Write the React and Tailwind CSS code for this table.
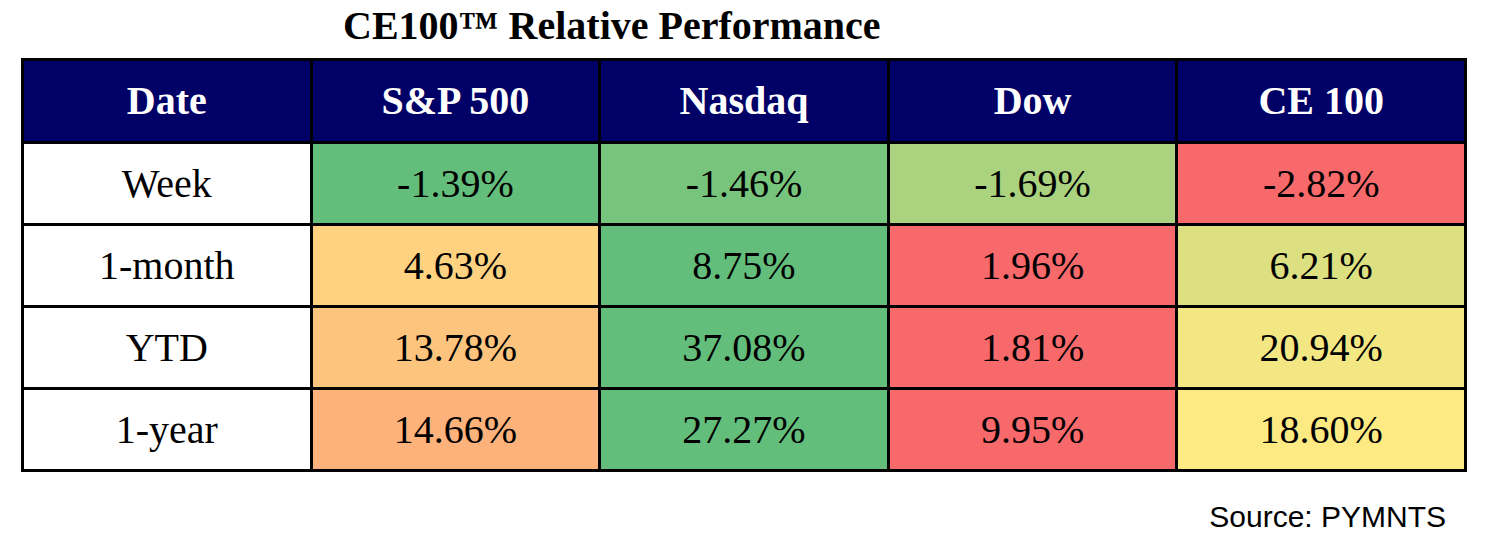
import React from "react";

const headers = ["Date", "S&P 500", "Nasdaq", "Dow", "CE 100"];

const rows = [
  {
    label: "Week",
    cells: [
      ["-1.39%", "bg-[#63be7b]"],
      ["-1.46%", "bg-[#77c47d]"],
      ["-1.69%", "bg-[#aad27f]"],
      ["-2.82%", "bg-[#f8696b]"],
    ],
  },
  {
    label: "1-month",
    cells: [
      ["4.63%", "bg-[#fed280]"],
      ["8.75%", "bg-[#63be7b]"],
      ["1.96%", "bg-[#f8696b]"],
      ["6.21%", "bg-[#dce081]"],
    ],
  },
  {
    label: "YTD",
    cells: [
      ["13.78%", "bg-[#fdc47d]"],
      ["37.08%", "bg-[#63be7b]"],
      ["1.81%", "bg-[#f8696b]"],
      ["20.94%", "bg-[#f3e783]"],
    ],
  },
  {
    label: "1-year",
    cells: [
      ["14.66%", "bg-[#fcb27a]"],
      ["27.27%", "bg-[#63be7b]"],
      ["9.95%", "bg-[#f8696b]"],
      ["18.60%", "bg-[#feea83]"],
    ],
  },
];

const serif = "font-['Liberation_Serif','Times_New_Roman',serif]";

export default function App() {
  return (
    <div className="w-[1488px] h-[534px] bg-white pl-[21px]">
      <div className={`h-[58px] flex items-center pl-[322px] pb-[6px] text-[40px] leading-none font-bold text-black ${serif}`}>
        CE100™ Relative Performance
      </div>
      <div className={`w-[1446px] grid grid-cols-5 gap-[3px] bg-black p-[3px] ${serif}`}>
        {headers.map((h) => (
          <div
            key={h}
            className="h-[80px] bg-[#000066] text-white font-bold text-[40px] flex items-center justify-center"
          >
            {h}
          </div>
        ))}
        {rows.map((r) => (
          <React.Fragment key={r.label}>
            <div className="h-[79px] bg-white text-black text-[40px] flex items-center justify-center">
              {r.label}
            </div>
            {r.cells.map(([v, bg]) => (
              <div
                key={v}
                className={`h-[79px] ${bg} text-black text-[40px] flex items-center justify-center`}
              >
                {v}
              </div>
            ))}
          </React.Fragment>
        ))}
      </div>
      <div className="flex justify-end pr-[42px] pt-[30px] text-[30px] leading-none text-black font-['Liberation_Sans',Arial,sans-serif]">
        Source: PYMNTS
      </div>
    </div>
  );
}
